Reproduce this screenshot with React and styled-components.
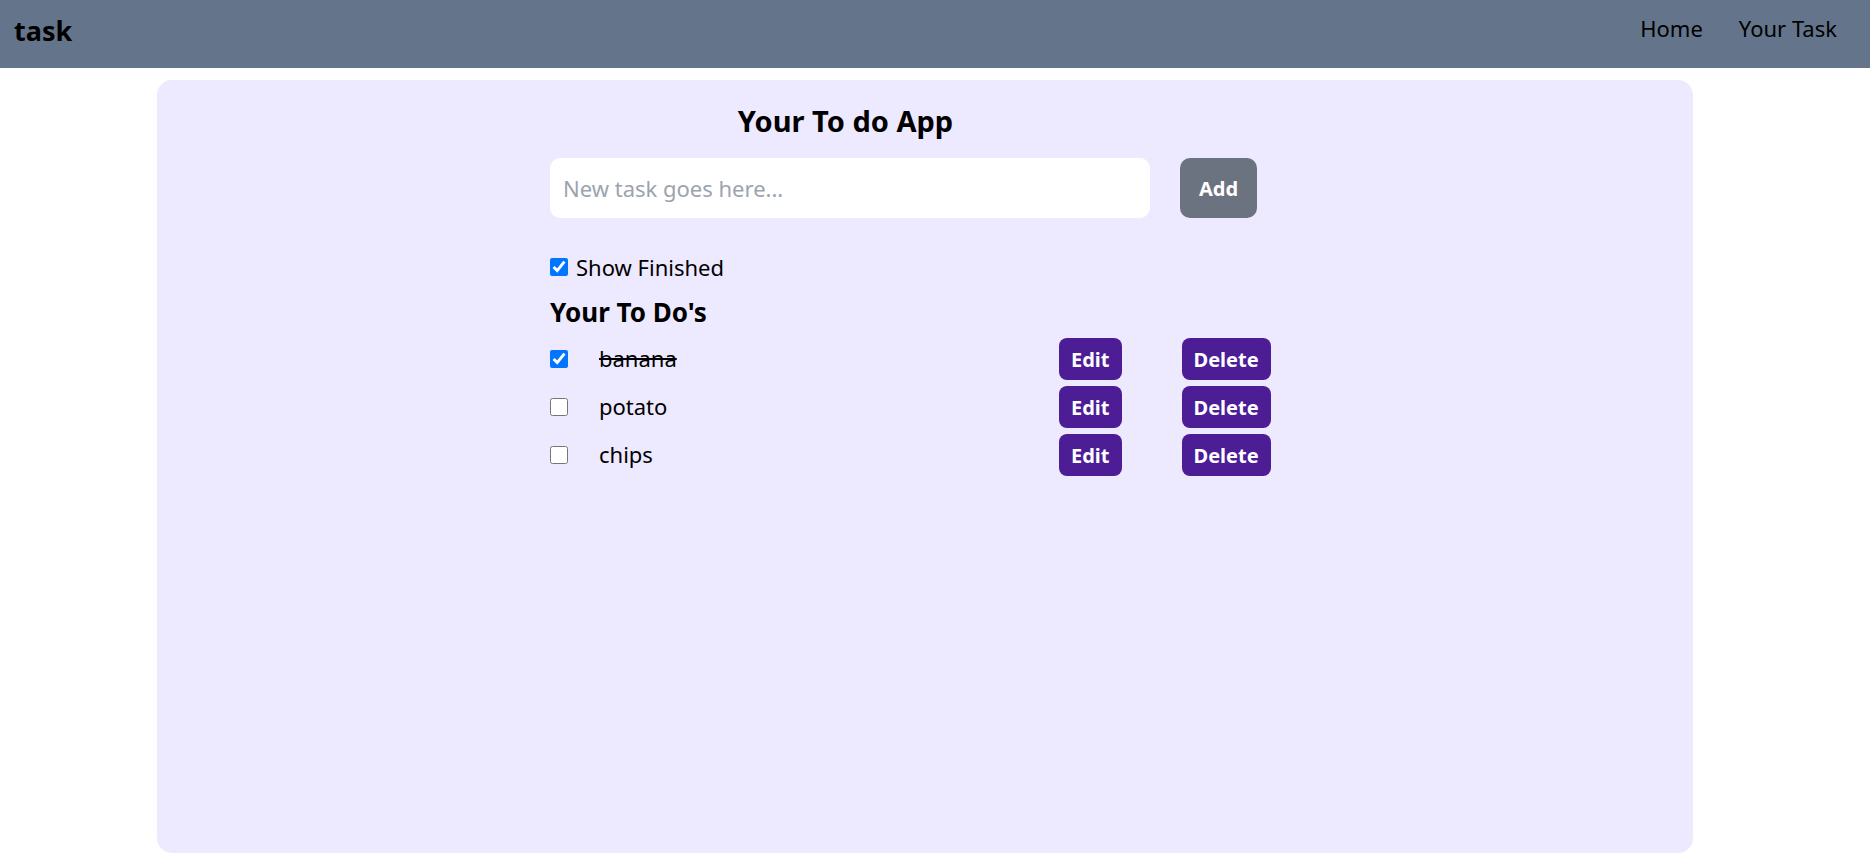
import React, { useState } from 'react';
import styled, { createGlobalStyle } from 'styled-components';

const GlobalStyle = createGlobalStyle`
  * {
    box-sizing: border-box;
  }
  body {
    margin: 0;
    background: #ffffff;
    font-family: "Noto Sans", "Open Sans", sans-serif;
    color: #000000;
  }
`;

const NavBar = styled.nav`
  display: flex;
  justify-content: space-between;
  align-items: flex-start;
  height: 68px;
  padding: 17px 33px 0 14px;
  background: #64748b;
`;

const Brand = styled.span`
  font-size: 27px;
  font-weight: 700;
  line-height: 1;
`;

const NavLinks = styled.ul`
  display: flex;
  gap: 36px;
  margin: 0;
  padding: 0;
  list-style: none;
  font-size: 22px;
  line-height: 1;
`;

const Panel = styled.main`
  width: 1536px;
  min-height: 773px;
  margin: 12px 0 0 157px;
  padding: 21px 0 0 393px;
  border-radius: 15px;
  background: #ede9fe;
`;

const Title = styled.h1`
  width: 591px;
  margin: 0;
  font-size: 29px;
  line-height: 40px;
  font-weight: 700;
  text-align: center;
`;

const AddForm = styled.div`
  display: flex;
  gap: 30px;
  margin-top: 17px;
`;

const TaskInput = styled.input`
  width: 600px;
  height: 60px;
  padding: 0 13px;
  border: none;
  border-radius: 10px;
  background: #ffffff;
  font-family: inherit;
  font-size: 22px;
  outline: none;
  &::placeholder {
    color: #9ca3af;
  }
`;

const Button = styled.button`
  min-width: ${(p) => p.$minWidth || 0}px;
  height: ${(p) => p.$height || 42}px;
  padding: 0 12px;
  border: none;
  border-radius: ${(p) => p.$radius || 8}px;
  background: ${(p) => p.$bg || '#4c1d95'};
  color: #ffffff;
  font-family: inherit;
  font-size: 20px;
  font-weight: 700;
  cursor: pointer;
`;

const ShowFinished = styled.label`
  display: flex;
  align-items: center;
  gap: 8px;
  height: 30px;
  margin-top: 34px;
  font-size: 22px;
`;

const Check = styled.input`
  width: 18px;
  height: 18px;
  margin: 0;
  accent-color: #0075ff;
`;

const ListHeading = styled.h2`
  margin: 13px 0 0;
  font-size: 26px;
  line-height: 34px;
  font-weight: 700;
`;

const List = styled.div`
  display: flex;
  flex-direction: column;
  gap: 6px;
  margin-top: 9px;
`;

const Row = styled.div`
  display: flex;
  align-items: center;
  height: 42px;
`;

const TodoText = styled.span`
  flex: 0 0 460px;
  margin-left: 31px;
  margin-top: -2px;
  font-size: 22px;
  text-decoration: ${(p) => (p.$done ? 'line-through' : 'none')};
`;

const Actions = styled.div`
  display: flex;
  gap: 60px;
`;

const initialTodos = [
  { id: 1, text: 'banana', done: true },
  { id: 2, text: 'potato', done: false },
  { id: 3, text: 'chips', done: false },
];

const App = () => {
  const [todos, setTodos] = useState(initialTodos);
  const [task, setTask] = useState('');
  const [showFinished, setShowFinished] = useState(true);

  const toggle = (id) => {
    setTodos(todos.map((t) => (t.id === id ? { ...t, done: !t.done } : t)));
  };

  const handleAdd = () => {
    if (!task.trim()) return;
    setTodos([...todos, { id: Date.now(), text: task, done: false }]);
    setTask('');
  };

  const handleDelete = (id) => {
    setTodos(todos.filter((t) => t.id !== id));
  };

  const handleEdit = (id) => {
    const item = todos.find((t) => t.id === id);
    setTask(item.text);
    handleDelete(id);
  };

  return (
    <>
      <GlobalStyle />
      <NavBar>
        <Brand>task</Brand>
        <NavLinks>
          <li>Home</li>
          <li>Your Task</li>
        </NavLinks>
      </NavBar>
      <Panel>
        <Title>Your To do App</Title>
        <AddForm>
          <TaskInput
            type="text"
            placeholder="New task goes here..."
            value={task}
            onChange={(e) => setTask(e.target.value)}
          />
          <Button $height={60} $minWidth={77} $radius={10} $bg="#6b7280" onClick={handleAdd}>
            Add
          </Button>
        </AddForm>
        <ShowFinished>
          <Check type="checkbox" checked={showFinished} onChange={() => setShowFinished(!showFinished)} />
          Show Finished
        </ShowFinished>
        <ListHeading>Your To Do's</ListHeading>
        <List>
          {todos
            .filter((t) => showFinished || !t.done)
            .map((t) => (
              <Row key={t.id}>
                <Check type="checkbox" checked={t.done} onChange={() => toggle(t.id)} />
                <TodoText $done={t.done}>{t.text}</TodoText>
                <Actions>
                  <Button onClick={() => handleEdit(t.id)}>Edit</Button>
                  <Button onClick={() => handleDelete(t.id)}>Delete</Button>
                </Actions>
              </Row>
            ))}
        </List>
      </Panel>
    </>
  );
};

export default App;
